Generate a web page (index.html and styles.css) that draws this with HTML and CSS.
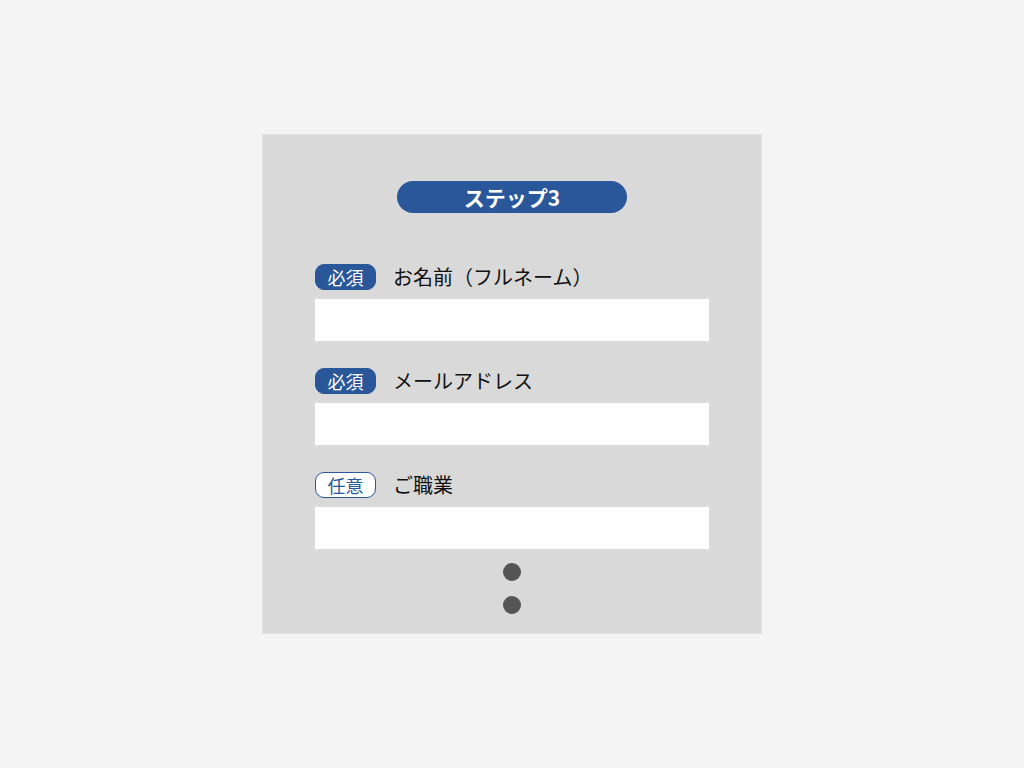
FILE: index.html
```html
<!DOCTYPE html>
<html lang="ja">
<head>
<meta charset="utf-8">
<link rel="stylesheet" href="styles.css">
</head>
<body>
<div class="page">
  <div class="card">
    <div class="step">ステップ3</div>
    <div class="form">
      <div class="field">
        <div class="label-row"><span class="badge req">必須</span><span class="label">お名前（フルネーム）</span></div>
        <div class="input"></div>
      </div>
      <div class="field">
        <div class="label-row"><span class="badge req">必須</span><span class="label">メールアドレス</span></div>
        <div class="input"></div>
      </div>
      <div class="field">
        <div class="label-row"><span class="badge opt">任意</span><span class="label">ご職業</span></div>
        <div class="input"></div>
      </div>
    </div>
    <div class="dots"><span class="dot"></span><span class="dot"></span></div>
  </div>
</div>
</body>
</html>
```
FILE: styles.css
```css
html, body {
  margin: 0;
  padding: 0;
  background: #f4f4f4;
  font-family: "Noto Sans CJK JP", "Noto Sans", sans-serif;
}
.page {
  width: 1024px;
  height: 768px;
  display: flex;
  align-items: center;
  justify-content: center;
}
.card {
  width: 498px;
  height: 498px;
  background: #d9d9d9;
  border: 1px solid #e3e3e3;
  display: flex;
  flex-direction: column;
  align-items: center;
  box-sizing: content-box;
}
.step {
  margin-top: 46px;
  width: 230px;
  height: 32px;
  border-radius: 16px;
  background: #2a579a;
  color: #fff;
  font-weight: 700;
  font-size: 21px;
  line-height: 32px;
  text-align: center;
}
.form {
  margin-top: 51px;
  width: 394px;
  display: flex;
  flex-direction: column;
  gap: 27px;
}
.field {
  display: flex;
  flex-direction: column;
  gap: 9px;
}
.label-row {
  display: flex;
  align-items: center;
  height: 26px;
}
.badge {
  box-sizing: border-box;
  width: 61px;
  height: 26px;
  border-radius: 9px;
  font-size: 18px;
  line-height: 24px;
  text-align: center;
  margin-right: 17px;
}
.badge.req {
  background: #2a579a;
  color: #fff;
  border: 1px solid #2a579a;
}
.badge.opt {
  background: #fff;
  color: #2a579a;
  border: 1px solid #2a579a;
}
.label {
  font-size: 20px;
  color: #111;
  line-height: 26px;
}
.input {
  height: 42px;
  background: #fff;
}
.dots {
  margin-top: 14px;
  display: flex;
  flex-direction: column;
  align-items: center;
  gap: 15px;
}
.dot {
  width: 18px;
  height: 18px;
  border-radius: 50%;
  background: #555;
}
```
